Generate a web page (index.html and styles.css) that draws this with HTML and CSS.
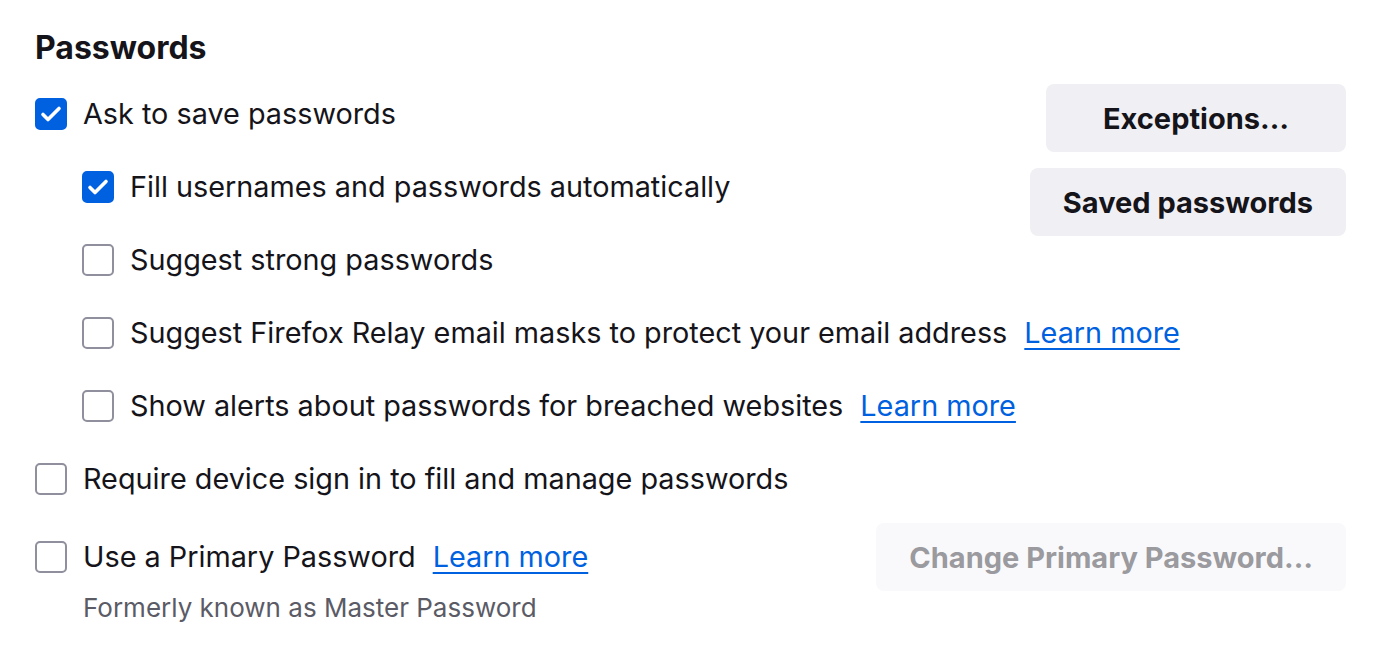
FILE: index.html
```html
<!DOCTYPE html>
<html lang="en">
<head>
  <meta charset="UTF-8" />
  <meta name="viewport" content="width=device-width, initial-scale=1.0" />
  <title>Passwords</title>
  <link rel="stylesheet" href="styles.css">
</head>
<body>
  <section class="prefs">
    <h2 class="prefs-title">Passwords</h2>

    <div class="group">
      <div class="group-options">
        <div class="row first">
          <span class="box checked"></span>
          <span class="label">Ask to save passwords</span>
        </div>
        <div class="row nested">
          <span class="box checked"></span>
          <span class="label">Fill usernames and passwords automatically</span>
        </div>
        <div class="row nested">
          <span class="box"></span>
          <span class="label">Suggest strong passwords</span>
        </div>
        <div class="row nested">
          <span class="box"></span>
          <span class="label">Suggest Firefox Relay email masks to protect your email address</span>
          <a class="learn" href="#">Learn more</a>
        </div>
        <div class="row nested">
          <span class="box"></span>
          <span class="label">Show alerts about passwords for breached websites</span>
          <a class="learn" href="#">Learn more</a>
        </div>
      </div>
      <div class="group-buttons">
        <button class="btn btn-exceptions">Exceptions…</button>
        <button class="btn">Saved passwords</button>
      </div>
    </div>

    <div class="row standalone">
      <span class="box"></span>
      <span class="label">Require device sign in to fill and manage passwords</span>
    </div>

    <div class="primary">
      <div class="row">
        <span class="box"></span>
        <span class="label">Use a Primary Password</span>
        <a class="learn" href="#">Learn more</a>
      </div>
      <button class="btn" disabled>Change Primary Password…</button>
    </div>
    <div class="note">Formerly known as Master Password</div>
  </section>
</body>
</html>
```

FILE: styles.css
```css
html, body {
  margin: 0;
  padding: 0;
  background: #fff;
  color: #15141a;
  font-family: Inter, "Noto Sans", sans-serif;
}
.prefs {
  padding: 28px 32px 0 35px;
}
.prefs-title {
  margin: 0;
  font-size: 32px;
  font-weight: 700;
  line-height: 40px;
}
.group {
  display: flex;
  justify-content: space-between;
  align-items: flex-start;
  margin-top: 16px;
}
/* rows run on under the buttons, which only sit beside the first two */
.group-options {
  display: flex;
  flex-direction: column;
  flex: 1 1 auto;
  min-width: 0;
  gap: 33px;
}
.group-buttons {
  display: flex;
  flex-direction: column;
  align-items: flex-end;
  flex-shrink: 0;
  gap: 16px;
}
.row {
  display: flex;
  align-items: center;
  height: 40px;
  font-size: 28.8px;
}
.row.first {
  margin-top: 10px;
}
.row.nested {
  margin-left: 47px;
}
.row.standalone {
  margin-top: 33px;
}
.box {
  box-sizing: border-box;
  width: 32px;
  height: 32px;
  border: 2px solid #8f8f9d;
  border-radius: 5px;
  margin-right: 16px;
  flex-shrink: 0;
}
.box.checked {
  border-color: #0061e0;
  background: #0061e0 url("data:image/svg+xml,%3Csvg xmlns='http://www.w3.org/2000/svg' viewBox='0 0 32 32'%3E%3Cpath d='M8 16.5l5 5 11-11' fill='none' stroke='white' stroke-width='3.6' stroke-linecap='round' stroke-linejoin='round'/%3E%3C/svg%3E") center / 32px 32px no-repeat;
}
.label {
  line-height: 40px;
  white-space: nowrap;
}
.learn {
  margin-left: 17px;
  color: #0061e0;
  white-space: nowrap;
  text-decoration: underline;
  text-underline-offset: 5px;
  text-decoration-thickness: 2px;
  line-height: 40px;
}
.btn {
  font-family: inherit;
  font-size: 29px;
  font-weight: 700;
  color: #15141a;
  background: #f0f0f4;
  border: none;
  border-radius: 8px;
  height: 68px;
  padding: 0 33px;
  white-space: nowrap;
}
.btn-exceptions {
  min-width: 300px;
}
.btn:disabled {
  background: #f9f9fb;
  color: #9a9a9f;
}
.primary {
  display: flex;
  justify-content: space-between;
  align-items: center;
  margin-top: 24px;
}
.note {
  margin-left: 48px;
  font-size: 26px;
  line-height: 34px;
  color: #5b5b66;
}
```
